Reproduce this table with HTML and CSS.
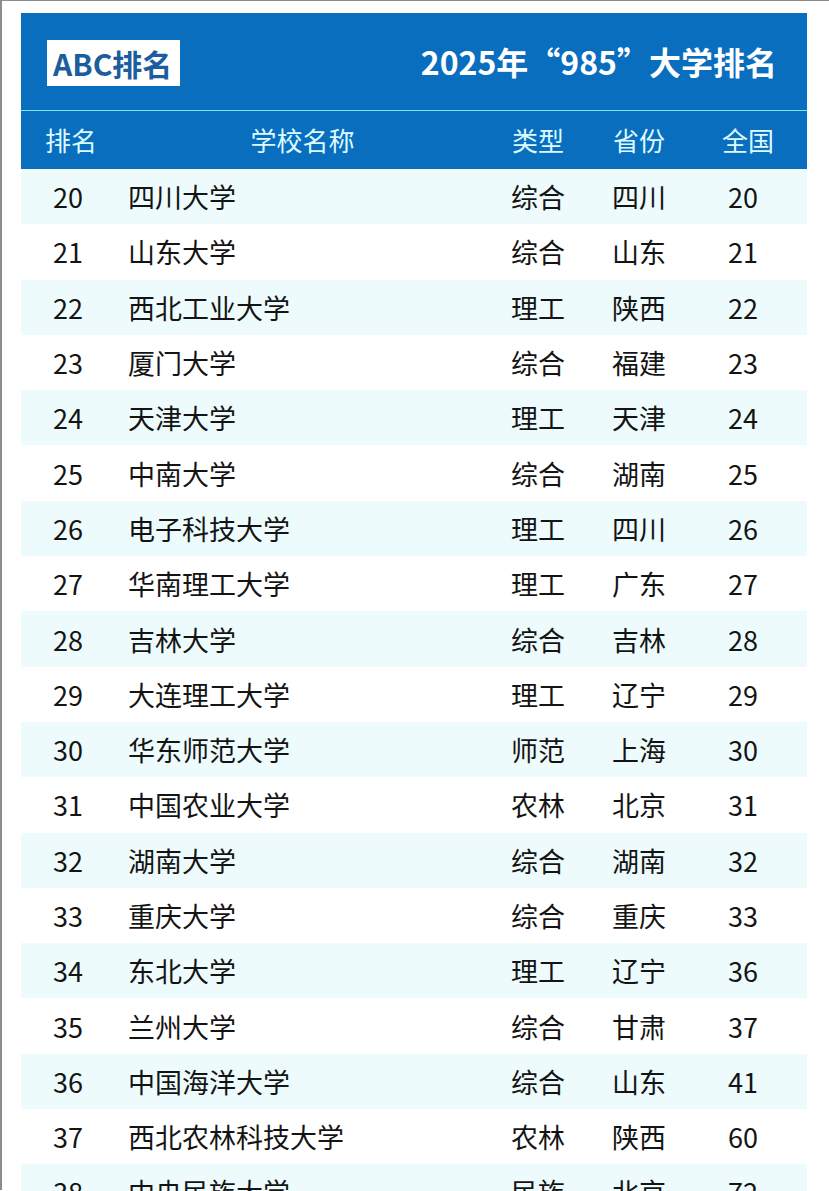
FILE: index.html
```html
<!DOCTYPE html>
<html lang="zh">
<head>
<meta charset="utf-8">
<link rel="stylesheet" href="styles.css">
</head>
<body>
<div class="frame">
  <div class="sheet">
    <div class="titlebar">
      <div class="logo">ABC排名</div>
      <div class="title">2025年“985”大学排名</div>
    </div>
    <div class="row head">
      <div class="c rank">排名</div>
      <div class="c name">学校名称</div>
      <div class="c type">类型</div>
      <div class="c prov">省份</div>
      <div class="c nat">全国</div>
    </div>
    <div class="row band"><div class="c rank">20</div><div class="c name">四川大学</div><div class="c type">综合</div><div class="c prov">四川</div><div class="c nat">20</div></div>
    <div class="row"><div class="c rank">21</div><div class="c name">山东大学</div><div class="c type">综合</div><div class="c prov">山东</div><div class="c nat">21</div></div>
    <div class="row band"><div class="c rank">22</div><div class="c name">西北工业大学</div><div class="c type">理工</div><div class="c prov">陕西</div><div class="c nat">22</div></div>
    <div class="row"><div class="c rank">23</div><div class="c name">厦门大学</div><div class="c type">综合</div><div class="c prov">福建</div><div class="c nat">23</div></div>
    <div class="row band"><div class="c rank">24</div><div class="c name">天津大学</div><div class="c type">理工</div><div class="c prov">天津</div><div class="c nat">24</div></div>
    <div class="row"><div class="c rank">25</div><div class="c name">中南大学</div><div class="c type">综合</div><div class="c prov">湖南</div><div class="c nat">25</div></div>
    <div class="row band"><div class="c rank">26</div><div class="c name">电子科技大学</div><div class="c type">理工</div><div class="c prov">四川</div><div class="c nat">26</div></div>
    <div class="row"><div class="c rank">27</div><div class="c name">华南理工大学</div><div class="c type">理工</div><div class="c prov">广东</div><div class="c nat">27</div></div>
    <div class="row band"><div class="c rank">28</div><div class="c name">吉林大学</div><div class="c type">综合</div><div class="c prov">吉林</div><div class="c nat">28</div></div>
    <div class="row"><div class="c rank">29</div><div class="c name">大连理工大学</div><div class="c type">理工</div><div class="c prov">辽宁</div><div class="c nat">29</div></div>
    <div class="row band"><div class="c rank">30</div><div class="c name">华东师范大学</div><div class="c type">师范</div><div class="c prov">上海</div><div class="c nat">30</div></div>
    <div class="row"><div class="c rank">31</div><div class="c name">中国农业大学</div><div class="c type">农林</div><div class="c prov">北京</div><div class="c nat">31</div></div>
    <div class="row band"><div class="c rank">32</div><div class="c name">湖南大学</div><div class="c type">综合</div><div class="c prov">湖南</div><div class="c nat">32</div></div>
    <div class="row"><div class="c rank">33</div><div class="c name">重庆大学</div><div class="c type">综合</div><div class="c prov">重庆</div><div class="c nat">33</div></div>
    <div class="row band"><div class="c rank">34</div><div class="c name">东北大学</div><div class="c type">理工</div><div class="c prov">辽宁</div><div class="c nat">36</div></div>
    <div class="row"><div class="c rank">35</div><div class="c name">兰州大学</div><div class="c type">综合</div><div class="c prov">甘肃</div><div class="c nat">37</div></div>
    <div class="row band"><div class="c rank">36</div><div class="c name">中国海洋大学</div><div class="c type">综合</div><div class="c prov">山东</div><div class="c nat">41</div></div>
    <div class="row"><div class="c rank">37</div><div class="c name">西北农林科技大学</div><div class="c type">农林</div><div class="c prov">陕西</div><div class="c nat">60</div></div>
    <div class="row band"><div class="c rank">38</div><div class="c name">中央民族大学</div><div class="c type">民族</div><div class="c prov">北京</div><div class="c nat">72</div></div>
  </div>
</div>
</body>
</html>
```

FILE: styles.css
```css
html, body {
  margin: 0;
  padding: 0;
  background: #ffffff;
}
body {
  font-family: "Noto Sans CJK SC", "Noto Sans", sans-serif;
  height: 1191px;
  overflow: hidden;
}
.frame {
  border-top: 1px solid #8c8c8c;
  border-left: 2px solid #8c8c8c;
  padding: 12px 22px 0 19px;
  height: 1190px;
  box-sizing: border-box;
}
.sheet {
  width: 786px;
}
.titlebar {
  background: #0a6ebf;
  height: 98px;
  display: flex;
  align-items: center;
  justify-content: space-between;
  padding: 0 30px 0 26px;
  box-sizing: border-box;
  border-bottom: 1px solid #7ee6f4;
}
.logo {
  background: #ffffff;
  color: #1b5e9e;
  font-weight: 700;
  font-size: 30px;
  line-height: 46px;
  height: 46px;
  padding: 0 8px 0 6px;
  margin-top: 2px;
}
.title {
  color: #ffffff;
  font-weight: 700;
  font-size: 32px;
  line-height: 1;
  margin-top: -2px;
}
.row {
  display: grid;
  grid-template-columns: 94px 375px 96px 106px 110px;
  height: 55.3px;
  align-items: center;
  font-size: 27px;
  color: #141414;
}
.row.band {
  background: #edfbfc;
}
.row.head {
  background: #0a6ebf;
  color: #dcfbff;
  height: 58px;
  font-size: 26px;
}
.c {
  text-align: center;
  line-height: 1;
}
.row .name {
  text-align: left;
  padding-left: 13px;
}
.row.head .name {
  text-align: center;
  padding-left: 0;
}
.row.head .rank {
  padding-left: 6px;
}
.row .nat {
  padding-right: 8px;
}
.row.head .nat {
  padding-right: 0;
  padding-left: 2px;
}
```
